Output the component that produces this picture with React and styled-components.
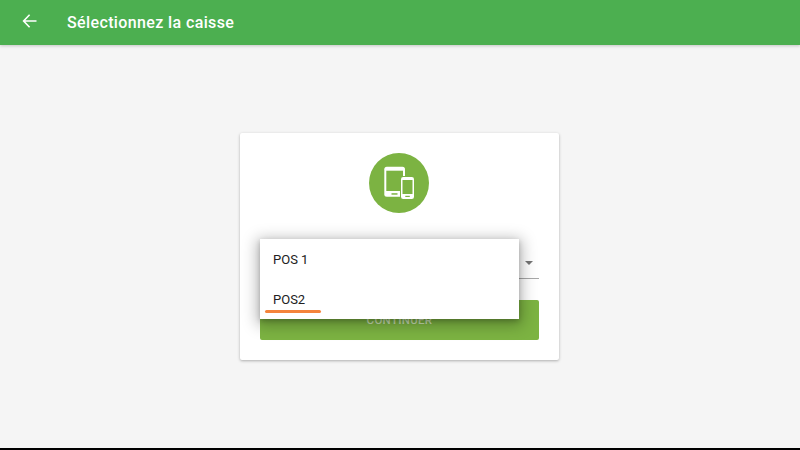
import React from 'react';
import styled, { createGlobalStyle } from 'styled-components';

const Global = createGlobalStyle`
  html, body { margin: 0; padding: 0; background: #000; }
  body { font-family: Roboto, "Liberation Sans", sans-serif; overflow: hidden; }
`;
const Screen = styled.div`
  width: 800px; height: 448px; background: #f5f5f5;
  display: flex; flex-direction: column;
`;
const AppBar = styled.header`
  height: 45px; flex: none; background: #4caf50; color: #fff;
  display: flex; align-items: center; padding-left: 21px; gap: 28px;
  box-shadow: 0 1px 3px rgba(0,0,0,.2);
`;
const BackIcon = styled.svg`
  width: 18px; height: 18px; display: block; margin-top: -3px;
`;
const Title = styled.h1`
  margin: -1px 0 0; font-size: 16px; font-weight: 500; letter-spacing: .38px; line-height: 45px;
`;
const Main = styled.main`
  flex: 1; display: flex; align-items: center; justify-content: center; padding-right: 1px;
`;
const Card = styled.section`
  position: relative; width: 279px; height: 187px; padding: 20px;
  background: #fff; border-radius: 2px;
  box-shadow: 0 1px 3px rgba(0,0,0,.3);
  display: flex; flex-direction: column; align-items: center;
`;
const Badge = styled.div`
  width: 60px; height: 60px; border-radius: 50%; background: #7cb342; flex: none; margin-right: 1px;
  display: flex; align-items: center; justify-content: center;
`;
const SelectField = styled.div`
  width: 100%; height: 33px; margin-top: 33px; flex: none; box-sizing: border-box;
  border-bottom: 1px solid #a8a8a8;
  display: flex; align-items: center; justify-content: flex-end; padding-right: 6px;
`;
const Caret = styled.span`
  width: 0; height: 0; border-left: 4px solid transparent; border-right: 4px solid transparent;
  border-top: 4px solid #757575; margin-top: 2px;
`;
const Continue = styled.button`
  width: 100%; height: 40px; margin-top: 21px; flex: none; border: 0; border-radius: 2px;
  background: #7cb342; color: rgba(255,255,255,.6); font: 500 11.5px Roboto, sans-serif; letter-spacing: .3px;
  padding: 0;
`;
const Menu = styled.ul`
  position: absolute; left: 20px; top: 106px; width: 259px; height: 80px; margin: 0; padding: 0;
  list-style: none; background: #fff;
  box-shadow: 0 3px 14px 3px rgba(0,0,0,.28), 0 2px 5px rgba(0,0,0,.2);
`;
const MenuItem = styled.li`
  height: 40px; padding-left: 13px; display: flex; align-items: center;
  font-size: 13px; color: #212121;
`;
const Highlight = styled.span`
  position: absolute; left: 25px; top: 177px; width: 56px; height: 3px; border-radius: 2px;
  background: #f5843c;
`;

export default function App() {
  return (
    <>
      <Global />
      <Screen>
        <AppBar>
          <BackIcon viewBox="0 0 18 18" fill="none" stroke="#fff" strokeWidth="1.6">
            <path d="M15.5 9H2.8M8.6 2.8 2.6 9l6 6.2" />
          </BackIcon>
          <Title>Sélectionnez la caisse</Title>
        </AppBar>
        <Main>
          <Card>
            <Badge>
              <svg width="34" height="34" viewBox="0 0 34 34">
                <rect x="2.3" y="0.7" width="20.7" height="30" rx="2.5" fill="#fff" />
                <rect x="4.3" y="4.7" width="16.7" height="20.3" fill="#7cb342" />
                <rect x="9.5" y="27.2" width="6" height="1.5" fill="#7cb342" />
                <rect x="18" y="10" width="15" height="24" rx="3" fill="#7cb342" />
                <rect x="19" y="11" width="13" height="22" rx="2.2" fill="#fff" />
                <rect x="20.5" y="14" width="10" height="14" fill="#7cb342" />
                <rect x="23.3" y="29.8" width="4.5" height="1.2" fill="#7cb342" />
              </svg>
            </Badge>
            <SelectField><Caret /></SelectField>
            <Continue>CONTINUER</Continue>
            <Menu>
              <MenuItem>POS 1</MenuItem>
              <MenuItem>POS2</MenuItem>
            </Menu>
            <Highlight />
          </Card>
        </Main>
      </Screen>
    </>
  );
}
